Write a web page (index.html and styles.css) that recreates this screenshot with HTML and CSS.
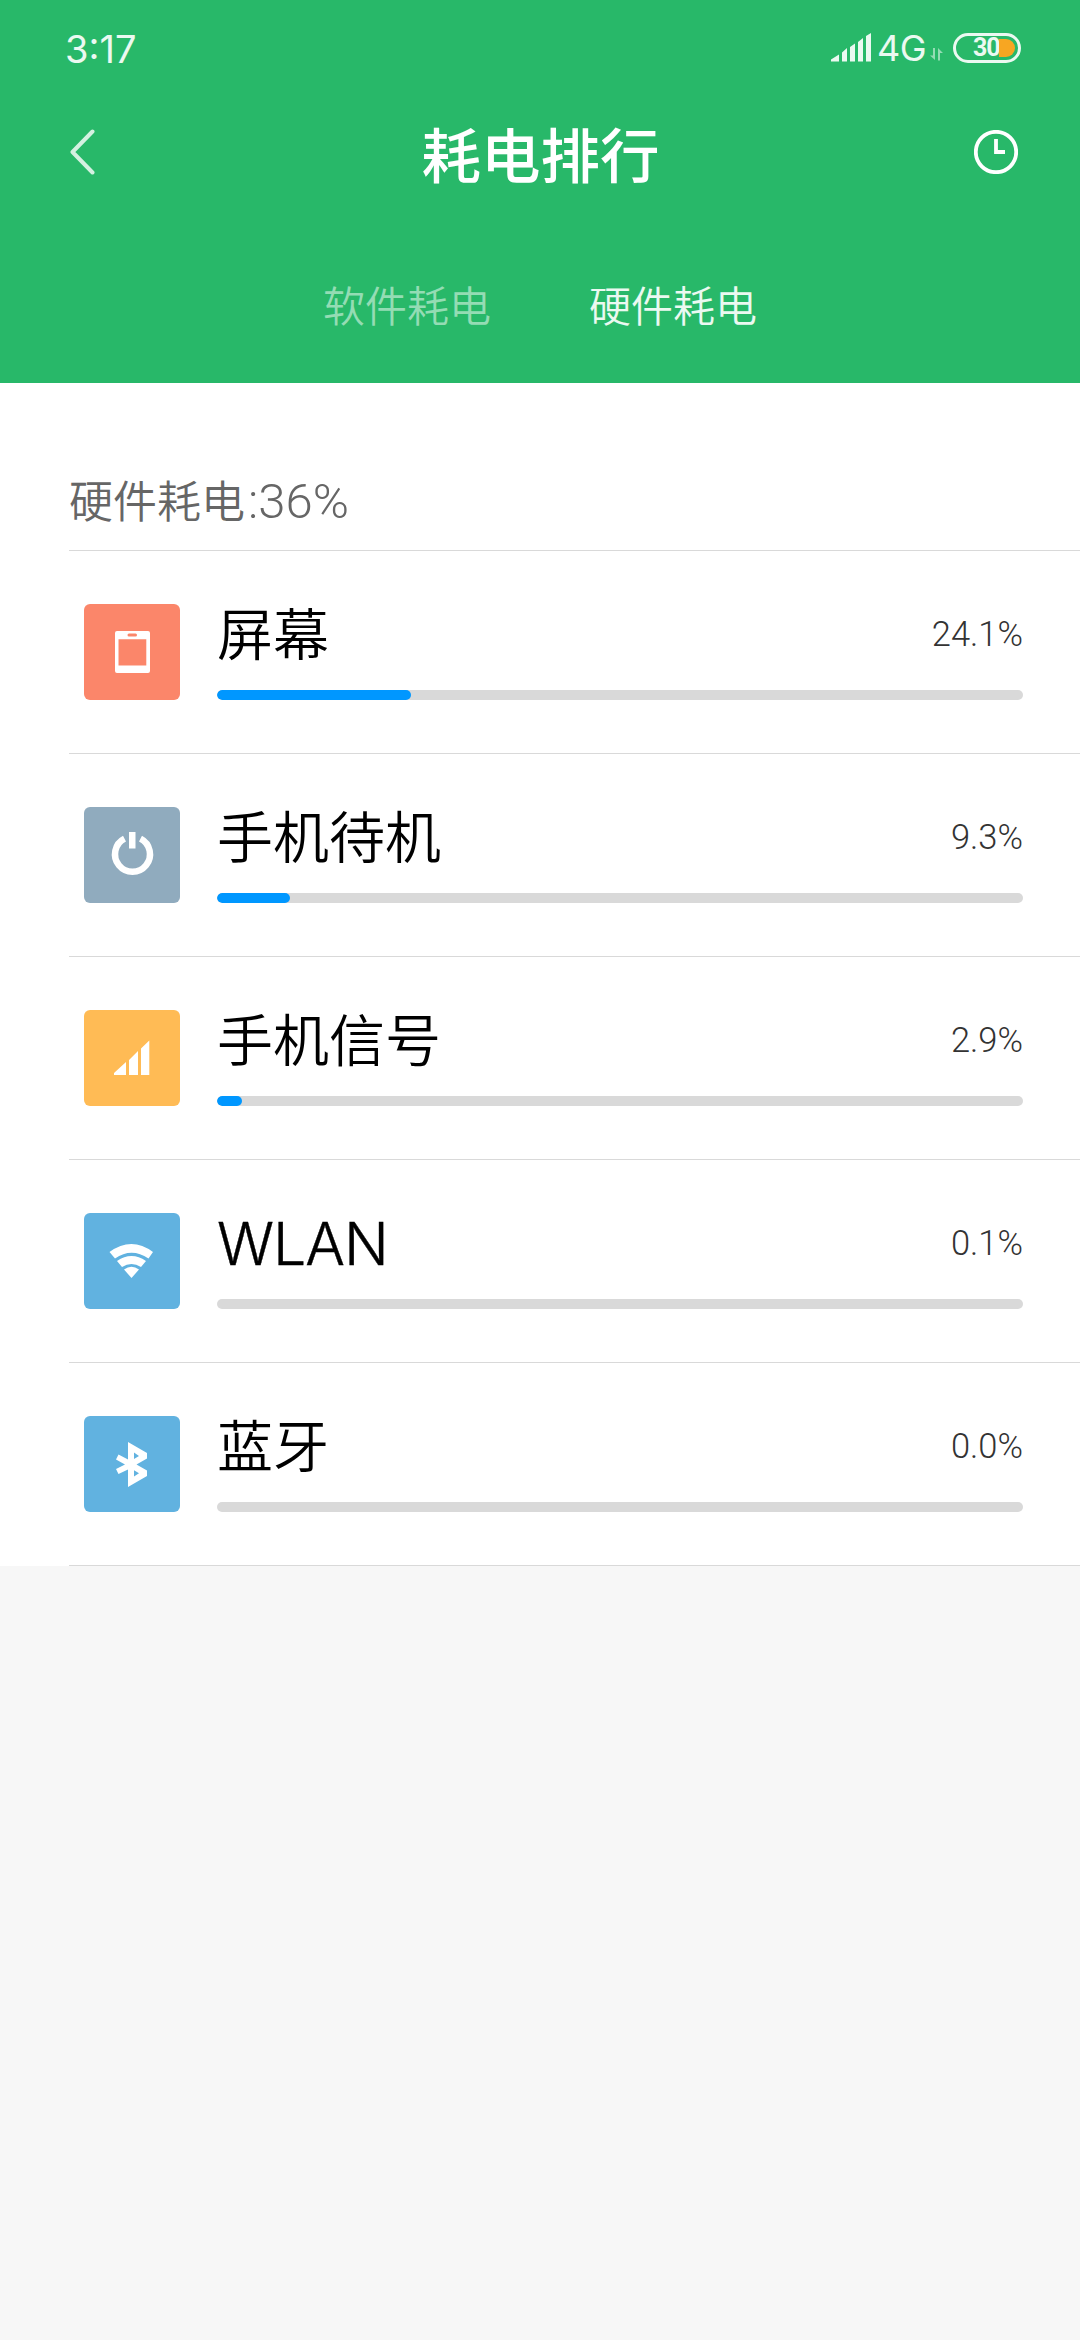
FILE: index.html
```html
<!DOCTYPE html>
<html lang="zh-CN">
<head>
<meta charset="utf-8">
<title>耗电排行</title>
<link rel="stylesheet" href="styles.css">
</head>
<body>
<header class="header">
  <div class="status">
    <span class="time">3:17</span>
    <div class="indicators">
      <svg class="signal" viewBox="0 0 40 29" width="40" height="29"><path d="M0 26.5 8 21.500V28.500H0zM11 19.500 16 15V28.500H11zM19 14 24 10.500V28.500H19zM27 9 32 5V28.500H27zM35 3 40 0V28.500H35z"/></svg>
      <span class="network">4G</span>
      <svg class="transfer" viewBox="0 0 13 13" width="13" height="13"><path d="M3 0H5V12L0 7.500H3zM8 12.500V0L13 5H10V12.500z"/></svg>
      <div class="battery"><span class="level">30</span><i class="charge"></i></div>
    </div>
  </div>
  <div class="titlebar">
    <svg class="back" viewBox="0 0 26 46" width="26" height="46"><path d="M23.500 2.500 3.500 23 23.500 43.500"/></svg>
    <h1 class="title">耗电排行</h1>
    <svg class="history" viewBox="0 0 44 44" width="44" height="44"><circle cx="22" cy="22" r="20.200"/><path d="M22 9V22H31"/></svg>
  </div>
  <nav class="tabs"><span class="tab">软件耗电</span><span class="tab active">硬件耗电</span></nav>
</header>
<main class="list">
  <h2 class="summary">硬件耗电<span class="total">:36%</span></h2>
  <section class="row">
    <svg class="icon" viewBox="0 0 96 96"><rect class="coral" width="96" height="96" rx="6"/><path fill-rule="evenodd" d="M33 27H64Q66 27 66 29V67Q66 69 64 69H33Q31 69 31 67V29Q31 27 33 27zM45 29.500Q43.500 29.500 43.500 31T45 32.500H51.500Q53 32.500 53 31T51.500 29.500zM34.500 35.300V61.500H62.300V35.300z"/></svg>
    <div class="info"><div class="labels"><span class="name">屏幕</span><span class="value">24.1%</span></div><div class="track"><div class="fill" style="width:194px"></div></div></div>
  </section>
  <section class="row">
    <svg class="icon" viewBox="0 0 96 96"><rect class="slate" width="96" height="96" rx="6"/><path class="ring" d="M40.500 31.700A17.500 17.500 0 1 0 56.500 31.700"/><path d="M45 25H51.500V41.500H45z"/></svg>
    <div class="info"><div class="labels"><span class="name">手机待机</span><span class="value">9.3%</span></div><div class="track"><div class="fill" style="width:73px"></div></div></div>
  </section>
  <section class="row">
    <svg class="icon" viewBox="0 0 96 96"><rect class="amber" width="96" height="96" rx="6"/><path d="M30 63 42 52V65H30zM45 50 54 41V65H45zM57 38.500 65.300 30.500V65H57z"/></svg>
    <div class="info"><div class="labels"><span class="name">手机信号</span><span class="value">2.9%</span></div><div class="track"><div class="fill" style="width:25px"></div></div></div>
  </section>
  <section class="row">
    <svg class="icon" viewBox="0 0 96 96"><rect class="blue" width="96" height="96" rx="6"/><path d="M25.500 39Q47.500 23 69 39L64.500 45.500Q47.500 34 31 45.500zM33 48Q47.500 38 62 48L57 54Q47.500 48 38 54zM40 56.500Q47.500 51 55 56.500L47.500 65z"/></svg>
    <div class="info"><div class="labels"><span class="name latin">WLAN</span><span class="value">0.1%</span></div><div class="track"></div></div>
  </section>
  <section class="row">
    <svg class="icon" viewBox="0 0 96 96"><rect class="blue" width="96" height="96" rx="6"/><path fill-rule="evenodd" d="M44 26 63 37V42.500L52.500 48.500 63 54.500V60L44 71V53.500L34.500 58 32 53 41 48.500 32 43.500 34.500 38.500 44 43.500zM50 36.500V43L55 40zM50 54.300V60.500L55 57.300z"/></svg>
    <div class="info"><div class="labels"><span class="name">蓝牙</span><span class="value">0.0%</span></div><div class="track"></div></div>
  </section>
</main>
</body>
</html>
```
FILE: styles.css
```css
* { box-sizing: border-box; margin: 0; padding: 0; }
body {
  width: 1080px;
  min-height: 2340px;
  background: #f7f7f7;
  font-family: "Noto Sans CJK SC", sans-serif;
  font-weight: 350;
  white-space: nowrap;
}
svg { display: block; flex: none; fill: #fff; }
.header { height: 383px; background: #28b869; color: #fff; }

.status {
  height: 98px;
  padding: 0 59px 0 65px;
  display: flex;
  align-items: center;
  justify-content: space-between;
}
.time, .network { font-family: Inter, sans-serif; color: #ebf9f1; }
.time { font-size: 38px; font-weight: 400; line-height: 44px; }
.indicators { display: flex; align-items: center; }
.signal { fill: #ebf9f1; margin-right: 6px; margin-bottom: 4px; }
.network { font-size: 36px; font-weight: 400; width: 53px; line-height: 44px; margin-top: -2px; letter-spacing: -0.5px; }
.transfer { fill: #94dcb4; margin: 10px 10px 0 0; }
.battery {
  width: 68px;
  height: 30px;
  margin-bottom: 3px;
  border: 3px solid #ebf9f1;
  border-radius: 15px;
  display: flex;
  align-items: center;
  padding: 0 3px 0 17px;
}
.level {
  width: 26px;
  font: 700 25px/24px Roboto, sans-serif;
  color: #ebf9f1;
  letter-spacing: -1px;
}
.charge { width: 16px; height: 18px; background: #f7a622; border-radius: 0 9px 9px 0; }

.titlebar {
  height: 108px;
  padding: 0 62px 0 69px;
  display: flex;
  align-items: center;
  justify-content: space-between;
}
.back { fill: none; stroke: #d4f1e1; stroke-width: 4; stroke-linecap: round; stroke-linejoin: round; }
.title { font-size: 59.500px; font-weight: 500; line-height: 80px; padding-left: 12px; margin-top: -1px; }
.history { fill: none; stroke: #fff; stroke-width: 3.800; }
.tabs { height: 177px; display: flex; justify-content: center; gap: 98px; padding-top: 68px; }
.tab { font-size: 42px; line-height: 60px; color: #94dcb4; }
.tab.active { color: #ebf9f1; }

.list { background: #fff; padding-left: 69px; height: 1183px; }
.summary {
  height: 168px;
  border-bottom: 1px solid #d9d9d9;
  font-size: 44px;
  font-weight: 350;
  line-height: 60px;
  padding-top: 86px;
  color: #666;
}
.total { font-family: Roboto, sans-serif; font-size: 49px; font-weight: 300; padding-left: 3px; }
.row {
  height: 203px;
  border-bottom: 1px solid #d9d9d9;
  display: flex;
  padding: 53px 57px 53px 15px;
}
.icon { width: 96px; height: 96px; margin-right: 37px; }
.coral { fill: #fb866a; }
.slate { fill: #90abbe; }
.amber { fill: #ffbb55; }
.blue { fill: #61b2e0; }
.ring { fill: none; stroke: #fff; stroke-width: 6.500; }
.info { flex: 1; display: flex; flex-direction: column; justify-content: space-between; }
.labels { height: 64px; display: flex; align-items: center; justify-content: space-between; }
.name { font-size: 56px; line-height: 64px; color: #000; margin-top: -11px; }
.latin { font-family: Inter, sans-serif; font-size: 59px; font-weight: 300; margin-top: -2px; letter-spacing: -1px; -webkit-text-stroke: 0.4px #000; }
.value { font-family: Roboto, sans-serif; font-size: 34.500px; font-weight: 300; line-height: 44px; color: #333; margin-top: -5px; }
.track { height: 10px; border-radius: 5px; background: #d9d9d9; overflow: hidden; }
.fill { height: 10px; border-radius: 5px; background: #0097ff; }
```
